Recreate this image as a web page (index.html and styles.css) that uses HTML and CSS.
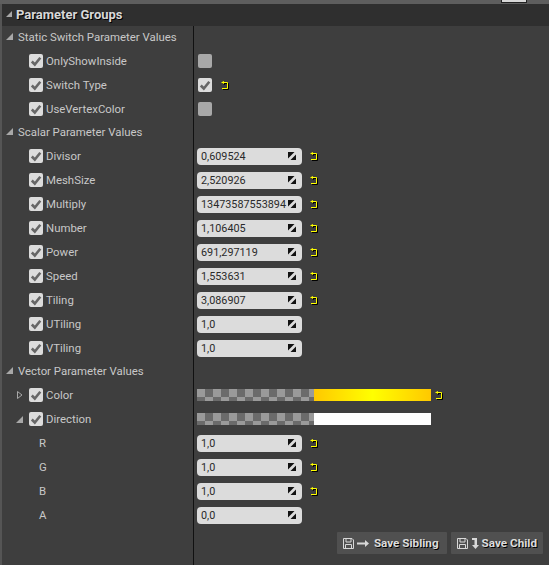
FILE: index.html
```html
<!DOCTYPE html>
<html lang="en">
<head>
    <meta charset="UTF-8">
    <meta name="viewport" content="width=device-width, initial-scale=1.0">
    <title>Parameter Groups</title>
    <link rel="stylesheet" href="styles.css">
</head>
<body>
    <svg class="defs" width="0" height="0">
        <symbol id="tick" viewBox="0 0 14 14"><path d="M2.800 7.500 5.800 10.500 11.300 3.800" fill="none" stroke="#666" stroke-width="2.600"/></symbol>
        <symbol id="reset" viewBox="0 0 8 8"><path d="M2 1.500H6.500V7.500H1" fill="none" stroke="#ffff00" stroke-width="1"/><path d="M0 1.500 3 0V3z" fill="#ffff00"/></symbol>
        <symbol id="grip" viewBox="0 0 8 8"><path d="M0 0H6.500L0 6.500z" fill="#111"/><path d="M8 8H2.500L8 2.500z" fill="#111"/></symbol>
        <symbol id="disk" viewBox="0 0 11 11"><path d="M.5.5H9L10.500 2V10.500H.5z M3 .5V4H8V.5 M2.500 10.500V6.500H8.500V10.500" fill="none" stroke="#d8d8d8"/></symbol>
    </svg>

    <div class="top-strip"><span class="top-tab"></span></div>

    <div class="panel">
        <div class="panel-title"><span class="arrow-open arrow-small"></span>Parameter Groups</div>

        <div class="section"><span class="arrow-open"></span>Static Switch Parameter Values</div>
        <div class="row">
            <div class="name"><span class="check"><svg><use href="#tick"/></svg></span>OnlyShowInside</div>
            <div class="value"><span class="toggle"></span></div>
        </div>
        <div class="row">
            <div class="name"><span class="check"><svg><use href="#tick"/></svg></span>Switch Type</div>
            <div class="value"><span class="check toggle-on"><svg><use href="#tick"/></svg></span><svg class="reset"><use href="#reset"/></svg></div>
        </div>
        <div class="row">
            <div class="name"><span class="check"><svg><use href="#tick"/></svg></span>UseVertexColor</div>
            <div class="value"><span class="toggle"></span></div>
        </div>

        <div class="section"><span class="arrow-open"></span>Scalar Parameter Values</div>
        <div class="row">
            <div class="name"><span class="check"><svg><use href="#tick"/></svg></span>Divisor</div>
            <div class="value"><span class="field">0,609524<svg class="grip"><use href="#grip"/></svg></span><svg class="reset"><use href="#reset"/></svg></div>
        </div>
        <div class="row">
            <div class="name"><span class="check"><svg><use href="#tick"/></svg></span>MeshSize</div>
            <div class="value"><span class="field">2,520926<svg class="grip"><use href="#grip"/></svg></span><svg class="reset"><use href="#reset"/></svg></div>
        </div>
        <div class="row">
            <div class="name"><span class="check"><svg><use href="#tick"/></svg></span>Multiply</div>
            <div class="value"><span class="field">13473587553894<svg class="grip"><use href="#grip"/></svg></span><svg class="reset"><use href="#reset"/></svg></div>
        </div>
        <div class="row">
            <div class="name"><span class="check"><svg><use href="#tick"/></svg></span>Number</div>
            <div class="value"><span class="field">1,106405<svg class="grip"><use href="#grip"/></svg></span><svg class="reset"><use href="#reset"/></svg></div>
        </div>
        <div class="row">
            <div class="name"><span class="check"><svg><use href="#tick"/></svg></span>Power</div>
            <div class="value"><span class="field">691,297119<svg class="grip"><use href="#grip"/></svg></span><svg class="reset"><use href="#reset"/></svg></div>
        </div>
        <div class="row">
            <div class="name"><span class="check"><svg><use href="#tick"/></svg></span>Speed</div>
            <div class="value"><span class="field">1,553631<svg class="grip"><use href="#grip"/></svg></span><svg class="reset"><use href="#reset"/></svg></div>
        </div>
        <div class="row">
            <div class="name"><span class="check"><svg><use href="#tick"/></svg></span>Tiling</div>
            <div class="value"><span class="field">3,086907<svg class="grip"><use href="#grip"/></svg></span><svg class="reset"><use href="#reset"/></svg></div>
        </div>
        <div class="row">
            <div class="name"><span class="check"><svg><use href="#tick"/></svg></span>UTiling</div>
            <div class="value"><span class="field">1,0<svg class="grip"><use href="#grip"/></svg></span></div>
        </div>
        <div class="row">
            <div class="name"><span class="check"><svg><use href="#tick"/></svg></span>VTiling</div>
            <div class="value"><span class="field">1,0<svg class="grip"><use href="#grip"/></svg></span></div>
        </div>

        <div class="section"><span class="arrow-open"></span>Vector Parameter Values</div>
        <div class="row">
            <div class="name"><svg class="arrow-closed" viewBox="0 0 6 8"><path d="M.5.5 5 4 .5 7.500z" fill="none" stroke="#a8a8a8"/></svg><span class="check"><svg><use href="#tick"/></svg></span>Color</div>
            <div class="value"><span class="swatch"><span class="alpha"></span><span class="colour colour-yellow"></span></span><svg class="reset"><use href="#reset"/></svg></div>
        </div>
        <div class="row">
            <div class="name"><span class="arrow-open arrow-row"></span><span class="check"><svg><use href="#tick"/></svg></span>Direction</div>
            <div class="value"><span class="swatch"><span class="alpha"></span><span class="colour colour-white"></span></span></div>
        </div>
        <div class="row">
            <div class="name name-child">R</div>
            <div class="value"><span class="field">1,0<svg class="grip"><use href="#grip"/></svg></span><svg class="reset"><use href="#reset"/></svg></div>
        </div>
        <div class="row">
            <div class="name name-child">G</div>
            <div class="value"><span class="field">1,0<svg class="grip"><use href="#grip"/></svg></span><svg class="reset"><use href="#reset"/></svg></div>
        </div>
        <div class="row">
            <div class="name name-child">B</div>
            <div class="value"><span class="field">1,0<svg class="grip"><use href="#grip"/></svg></span><svg class="reset"><use href="#reset"/></svg></div>
        </div>
        <div class="row">
            <div class="name name-child">A</div>
            <div class="value"><span class="field">0,0<svg class="grip"><use href="#grip"/></svg></span></div>
        </div>

        <div class="footer">
            <div class="footer-buttons">
                <button class="save-btn save-sibling">
                    <svg class="disk"><use href="#disk"/></svg>
                    <svg class="save-arrow" viewBox="0 0 12 7"><path d="M0 2.500H8V0L12 3.500 8 7V4.500H0z" fill="#d8d8d8"/></svg>
                    Save Sibling
                </button>
                <button class="save-btn">
                    <svg class="disk"><use href="#disk"/></svg>
                    <svg class="save-arrow save-arrow-down" viewBox="0 0 8 11"><path d="M1 0H6V7H8L4.500 11 1 7H3.500V2H1z" fill="#d8d8d8"/></svg>
                    Save Child
                </button>
            </div>
        </div>
    </div>
</body>
</html>
```

FILE: styles.css
```css
html, body {
    height: 100%;
}

body {
    margin: 0;
    display: flex;
    flex-direction: column;
    background-color: #3e3e3e;
    color: #c8c8c8;
    font-family: 'Roboto', sans-serif;
    font-size: 11.4px;
    overflow: hidden;
}

.defs {
    position: absolute;
}

.top-strip {
    height: 4px;
    flex: none;
    background-color: #5e5e5e;
    position: relative;
}

.top-tab {
    position: absolute;
    left: 501px;
    top: 0;
    width: 26px;
    height: 3px;
    background-color: #d8d8d8;
    border: 1px solid #222;
    border-top: 0;
    box-sizing: border-box;
}

.panel {
    flex: 1;
    display: flex;
    flex-direction: column;
    border-left: 2px solid #555;
}

.panel-title {
    height: 22px;
    flex: none;
    box-sizing: border-box;
    display: flex;
    align-items: center;
    gap: 4px;
    padding: 0 0 2px 4px;
    background-color: #2f2f2f;
    font-size: 13px;
    font-weight: 700;
    color: #d8d8d8;
    text-shadow: 1px 1px 0 #000;
}

.section {
    height: 23px;
    flex: none;
    box-sizing: border-box;
    display: flex;
    align-items: center;
    gap: 5px;
    padding: 0 0 2px 4px;
}

.section,
.row {
    background-image: linear-gradient(#111, #111);
    background-size: 1px 100%;
    background-position: 191px 0;
    background-repeat: no-repeat;
}

.arrow-open {
    width: 0;
    height: 0;
    flex: none;
    border-style: solid;
    border-width: 0 0 7px 7px;
    border-color: transparent transparent #a8a8a8 transparent;
}

.arrow-small {
    border-width: 0 0 6px 6px;
}

.arrow-closed {
    position: absolute;
    left: 15px;
    width: 6px;
    height: 8px;
}

.arrow-row {
    position: absolute;
    left: 14px;
}

.row {
    height: 24px;
    flex: none;
    display: flex;
    align-items: center;
}

.name {
    width: 192px;
    flex: none;
    box-sizing: border-box;
    display: flex;
    align-items: center;
    gap: 3px;
    padding-left: 27px;
    position: relative;
}

.name-child {
    padding-left: 37px;
}

.check {
    width: 14px;
    height: 14px;
    flex: none;
    border-radius: 2px;
    background-color: #dcdcdc;
    display: block;
}

.check svg {
    display: block;
    width: 14px;
    height: 14px;
}

.value {
    display: flex;
    align-items: center;
    padding-left: 3px;
}

.toggle {
    width: 14px;
    height: 14px;
    margin-left: 1px;
    border-radius: 2px;
    background-color: #a8a8a8;
}

.toggle-on {
    margin-left: 1px;
}

.field {
    width: 105px;
    height: 17px;
    box-sizing: border-box;
    display: flex;
    align-items: center;
    justify-content: space-between;
    padding: 0 6px 0 4px;
    border-radius: 4px;
    background-color: #dcdcdc;
    color: #2a2a2a;
    font-size: 10.8px;
}

.grip {
    width: 8px;
    height: 8px;
    flex: none;
}

.reset {
    width: 8px;
    height: 8px;
    margin-left: 8px;
    flex: none;
    filter: drop-shadow(1px 1px 0 #000);
}

.check + .reset {
    margin-left: 9px;
}

.swatch {
    width: 234px;
    height: 12px;
    display: flex;
}

.alpha {
    width: 117px;
    background-color: #6b6b6b;
    background-image: conic-gradient(#6b6b6b 25%, #9a9a9a 0 50%, #6b6b6b 0 75%, #9a9a9a 0);
    background-size: 16px 16px;
}

.colour {
    flex: 1;
}

.colour-yellow {
    background-image: linear-gradient(90deg, #ffc800, #ffff00 50%, #ffc800);
}

.colour-white {
    background-color: #fff;
}

.swatch + .reset {
    margin-left: 4px;
}

.footer {
    flex: 1;
    padding-top: 5px;
    background-image: linear-gradient(#111, #111);
    background-size: 1px 100%;
    background-position: 191px 0;
    background-repeat: no-repeat;
}

.footer-buttons {
    display: flex;
    justify-content: flex-end;
    gap: 4px;
    padding-right: 6px;
}

.save-btn {
    height: 22px;
    display: flex;
    align-items: center;
    gap: 3px;
    padding: 0 6px;
    border: 0;
    border-radius: 1px;
    background-color: #505050;
    color: #dcdcdc;
    font-family: 'Roboto', sans-serif;
    font-size: 11.7px;
    font-weight: 700;
    text-shadow: 1px 1px 0 #000;
}

.save-sibling {
    padding-right: 8px;
}

.disk {
    width: 11px;
    height: 11px;
    flex: none;
}

.save-arrow {
    width: 12px;
    height: 7px;
    flex: none;
}

.save-sibling .save-arrow {
    margin-right: 2px;
}

.save-arrow-down {
    width: 8px;
    height: 11px;
}
```
